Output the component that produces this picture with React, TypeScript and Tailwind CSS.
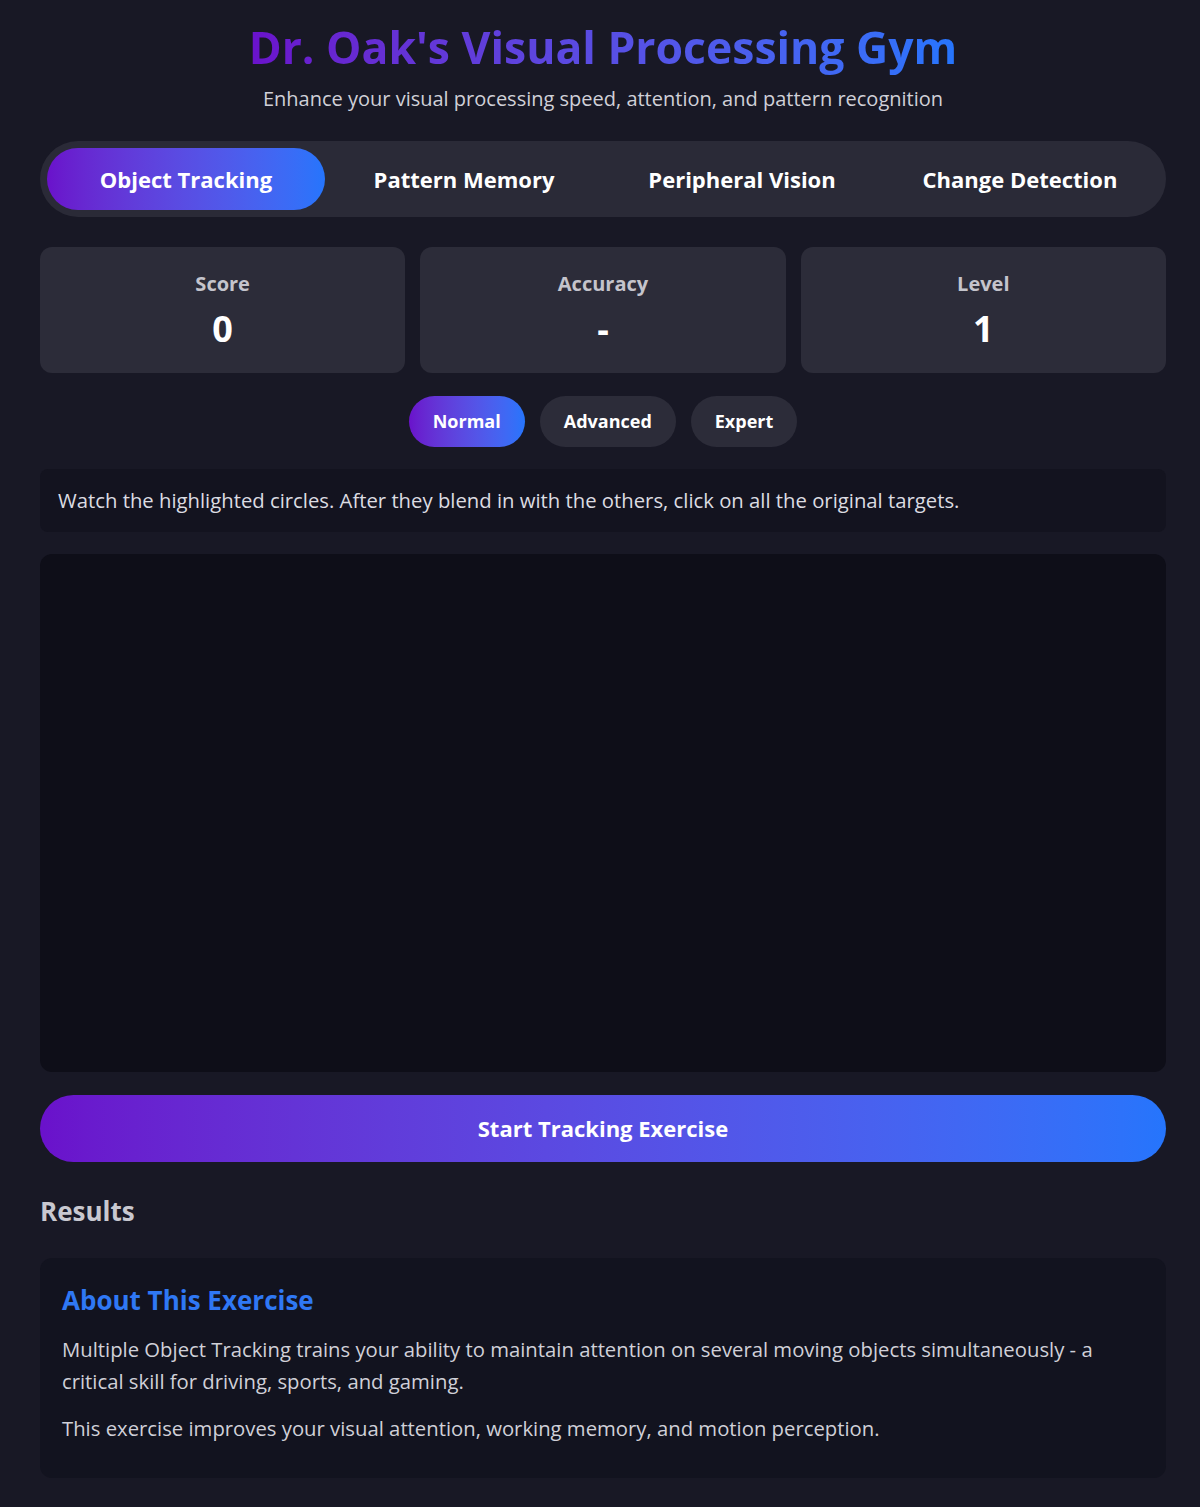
import { useState } from "react";

const tabs = ["Object Tracking", "Pattern Memory", "Peripheral Vision", "Change Detection"];
const levels = ["Normal", "Advanced", "Expert"];

const stats = [
  { label: "Score", value: "0" },
  { label: "Accuracy", value: "-" },
  { label: "Level", value: "1" },
];

export default function App() {
  const [tab, setTab] = useState(0);
  const [level, setLevel] = useState(0);

  return (
    <div className="min-h-[1507px] bg-[#181825] text-white font-['Open_Sans',sans-serif]">
      <div className="pl-10 pr-[34px] pt-[18px] pb-8">
        <header className="text-center">
          <h1 className="inline-block bg-gradient-to-r from-[#6a11cb] to-[#2575fc] bg-clip-text text-[44.5px] font-bold leading-[58px] text-transparent">
            Dr. Oak's Visual Processing Gym
          </h1>
          <p className="mt-[8px] text-[20px] text-[#d0d0d8]">
            Enhance your visual processing speed, attention, and pattern recognition
          </p>
        </header>

        {/* exercise tabs */}
        <nav className="mt-[27px] grid grid-cols-4 rounded-full bg-[#2a2a37] p-[7px]">
          {tabs.map((t, i) => (
            <button
              key={t}
              onClick={() => setTab(i)}
              className={
                i === tab
                  ? "h-[62px] rounded-full bg-gradient-to-r from-[#6a11cb] to-[#2575fc] text-[22px] font-bold text-white"
                  : "h-[62px] rounded-full text-[22px] font-bold text-white"
              }
            >
              {t}
            </button>
          ))}
        </nav>

        <section className="mt-[30px] grid grid-cols-3 gap-[15px]">
          {stats.map((s) => (
            <div key={s.label} className="flex h-[126px] flex-col items-center rounded-xl bg-[#2c2c39] pt-[23px]">
              <span className="text-[20px] font-bold leading-[28px] text-[#c4c4cc]">{s.label}</span>
              <span className="mt-[9px] text-[36px] font-bold leading-[44px] text-white">{s.value}</span>
            </div>
          ))}
        </section>

        <div className="mt-[23px] flex justify-center gap-[15px]">
          {levels.map((l, i) => (
            <button
              key={l}
              onClick={() => setLevel(i)}
              className={
                i === level
                  ? "h-[51px] rounded-full bg-gradient-to-r from-[#6a11cb] to-[#2575fc] px-[24px] text-[18px] font-bold text-white"
                  : "h-[51px] rounded-full bg-[#2c2c39] px-[24px] text-[18px] font-bold text-white"
              }
            >
              {l}
            </button>
          ))}
        </div>

        <div className="mt-[22px] rounded-lg bg-[#13131f] px-[18px] py-[16px] text-[20.3px] leading-[31px] text-[#dcdce2]">
          Watch the highlighted circles. After they blend in with the others, click on all the original targets.
        </div>

        <div className="mt-[22px] h-[518px] rounded-xl bg-[#0e0e18]" />

        <button className="mt-[23px] h-[67px] w-full rounded-full bg-gradient-to-r from-[#6a11cb] to-[#2575fc] text-[22px] font-bold text-white">
          Start Tracking Exercise
        </button>

        <h2 className="mt-[30px] text-[26px] font-bold text-[#c8c8d0]">Results</h2>

        <section className="mt-[27px] rounded-xl bg-[#12131f] px-[22px] pt-[25px] pb-[34px]">
          <h3 className="text-[26px] font-bold leading-[34px] text-[#2f78f4]">About This Exercise</h3>
          <p className="mt-[16px] text-[20.3px] leading-[32px] text-[#d0d0d8]">
            Multiple Object Tracking trains your ability to maintain attention on several moving objects simultaneously - a critical skill for driving, sports, and gaming.
          </p>
          <p className="mt-[15px] text-[20.3px] leading-[32px] text-[#d0d0d8]">
            This exercise improves your visual attention, working memory, and motion perception.
          </p>
        </section>
      </div>
    </div>
  );
}
